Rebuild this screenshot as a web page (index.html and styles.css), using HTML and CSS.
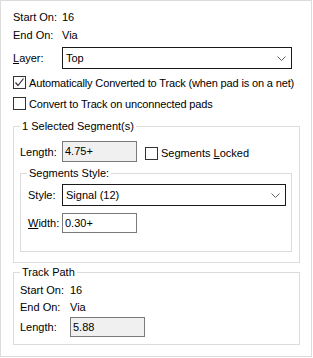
FILE: index.html
```html
<!DOCTYPE html>
<html lang="en">
<head>
  <meta charset="UTF-8" />
  <title>Track Properties</title>
  <link rel="stylesheet" href="styles.css">
</head>
<body>
  <div class="panel">
    <div class="info-row">
      <span class="label">Start On:</span><span>16</span>
    </div>
    <div class="info-row">
      <span class="label">End On:</span><span>Via</span>
    </div>

    <div class="field-row layer-row">
      <span class="label"><u>L</u>ayer:</span>
      <div class="combo wide">
        <span>Top</span>
        <svg class="chevron" width="9" height="5" viewBox="0 0 9 5"><path d="M0.5 0.5 L4.5 4.5 L8.5 0.5" /></svg>
      </div>
    </div>

    <label class="check-row first">
      <span class="box checked">
        <svg width="11" height="11" viewBox="0 0 11 11"><path d="M1.5 5.5 L4 8.5 L9.5 1.5" /></svg>
      </span>
      <span class="check-text">Automatically Converted to Track (when pad is on a net)</span>
    </label>
    <label class="check-row second">
      <span class="box"></span>
      <span class="check-text">Convert to Track on unconnected pads</span>
    </label>

    <!-- Selected segments group -->
    <div class="group segments">
      <span class="group-title">1 Selected Segment(s)</span>
      <div class="field-row">
        <span class="label seg-label">Length:</span>
        <div class="edit readonly">4.75+</div>
        <label class="check-inline">
          <span class="box"></span>
          <span>Segments <u>L</u>ocked</span>
        </label>
      </div>

      <div class="group style-group">
        <span class="group-title">Segments Style:</span>
        <div class="field-row">
          <span class="label style-label">Style:</span>
          <div class="combo narrow">
            <span>Signal (12)</span>
            <svg class="chevron" width="9" height="5" viewBox="0 0 9 5"><path d="M0.5 0.5 L4.5 4.5 L8.5 0.5" /></svg>
          </div>
        </div>
        <div class="field-row width-row">
          <span class="label style-label"><u>W</u>idth:</span>
          <div class="edit">0.30+</div>
        </div>
      </div>
    </div>

    <!-- Track path group -->
    <div class="group track">
      <span class="group-title">Track Path</span>
      <div class="info-row tight">
        <span class="label track-label">Start On:</span><span>16</span>
      </div>
      <div class="info-row tight">
        <span class="label track-label">End On:</span><span>Via</span>
      </div>
      <div class="field-row track-length">
        <span class="label track-label">Length:</span>
        <div class="edit readonly">5.88</div>
      </div>
    </div>
  </div>
</body>
</html>
```

FILE: styles.css
```css
body {
  margin: 0;
  background: #fff;
  font-family: 'Liberation Sans', Arial, sans-serif;
  font-size: 11px;
  color: #000;
  white-space: nowrap;
}

.panel {
  box-sizing: border-box;
  width: 312px;
  height: 357px;
  border: 1px solid #dcdcdc;
  padding: 7px 11px 0 12px;
}

.info-row {
  display: flex;
  height: 18px;
  line-height: 18px;
}

.info-row.tight {
  height: 17px;
  line-height: 17px;
}

.label {
  width: 49px;
  flex-shrink: 0;
}

u {
  text-decoration-thickness: 1px;
  text-underline-offset: 1px;
}

.field-row {
  display: flex;
  align-items: center;
}

.layer-row {
  margin-top: 3px;
}

/* combo boxes */
.combo {
  box-sizing: border-box;
  height: 22px;
  border: 1px solid #1a1a1a;
  display: flex;
  align-items: center;
  justify-content: space-between;
  padding: 0 5px 0 3px;
}

.combo.wide {
  width: 230px;
}

.combo.narrow {
  width: 224px;
}

.chevron path {
  fill: none;
  stroke: #606060;
  stroke-width: 1;
}

/* text boxes */
.edit {
  box-sizing: border-box;
  width: 75px;
  height: 21px;
  line-height: 19px;
  border: 1px solid #7a7a7a;
  padding-left: 2px;
  background: #fff;
}

.edit.readonly {
  background: #f0f0f0;
}

/* check boxes */
.check-row {
  display: flex;
  align-items: center;
  height: 13px;
}

.check-row.first {
  margin-top: 7px;
}

.check-row.second {
  margin-top: 8px;
}

.check-text {
  letter-spacing: -0.15px;
}

.box {
  box-sizing: border-box;
  width: 13px;
  height: 13px;
  border: 1px solid #333;
  background: #fff;
  margin-right: 3px;
  flex-shrink: 0;
  display: flex;
  align-items: center;
  justify-content: center;
}

.box svg path {
  fill: none;
  stroke: #333;
  stroke-width: 1.2;
}

.check-inline {
  display: flex;
  align-items: center;
  margin-left: 8px;
  margin-top: 3px;
}

/* group boxes */
.group {
  position: relative;
  border: 1px solid #dcdcdc;
}

.group-title {
  position: absolute;
  top: -8px;
  left: 6px;
  padding: 0 2px;
  line-height: 14px;
  background: #fff;
}

.segments {
  margin-top: 16px;
  padding: 14px 7px 10px 6px;
}

.seg-label {
  width: 42px;
}

.style-group {
  margin-top: 11px;
  padding: 10px 5px 18px 7px;
}

.style-label {
  width: 34px;
}

.width-row {
  margin-top: 7px;
}

.width-row .edit {
  height: 20px;
  line-height: 18px;
}

.track {
  margin-top: 9px;
  padding: 9px 7px 7px 6px;
}

.track-label {
  width: 50px;
}

.track-length {
  margin-top: 1px;
}

.track-length .edit {
  height: 20px;
  line-height: 18px;
}
```
